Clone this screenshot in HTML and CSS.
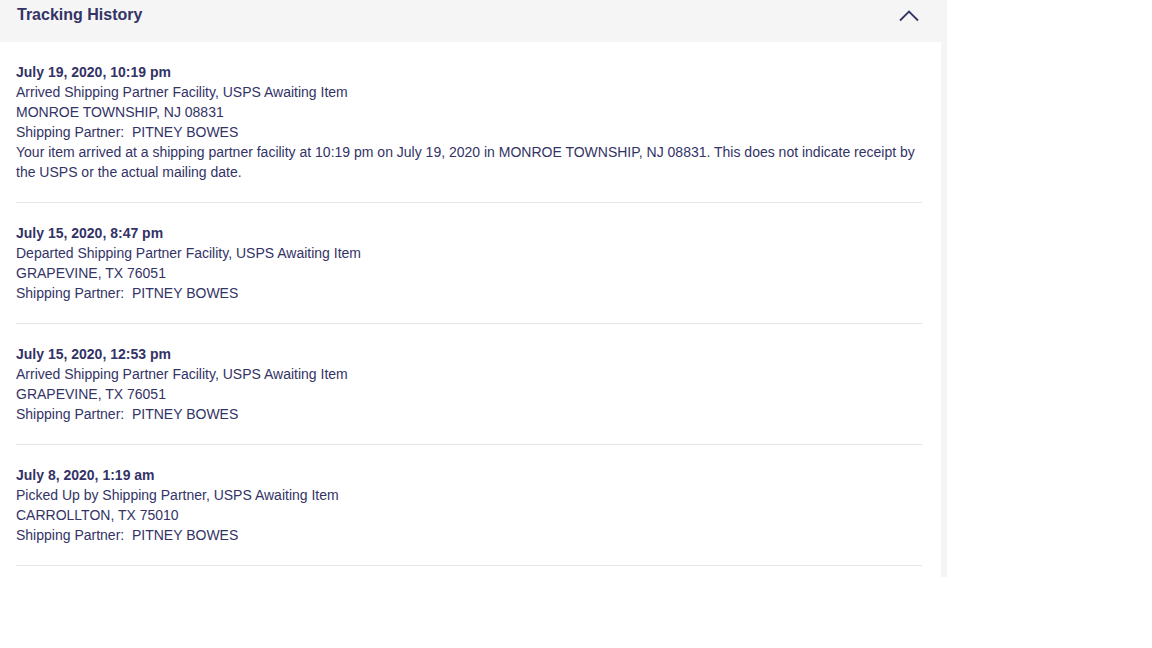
FILE: index.html
```html
<!doctype html>
<html>
<head>
<meta charset="UTF-8"/>
<link rel="stylesheet" href="styles.css">
<title>Tracking History</title>
</head>
<body>
<section class="history">
  <div class="history-head">
    <h2>Tracking History</h2>
    <svg class="chevron" width="20" height="12" viewBox="0 0 20 12">
      <polyline points="1,10.5 10,1.5 19,10.5" fill="none" stroke="#333366" stroke-width="1.8"/>
    </svg>
  </div>
  <div class="history-body">
    <div class="event">
      <div class="date">July 19, 2020, 10:19 pm</div>
      <div>Arrived Shipping Partner Facility, USPS Awaiting Item</div>
      <div>MONROE TOWNSHIP, NJ 08831</div>
      <div>Shipping Partner:&nbsp; PITNEY BOWES</div>
      <div>Your item arrived at a shipping partner facility at 10:19 pm on July 19, 2020 in MONROE TOWNSHIP, NJ 08831. This does not indicate receipt by the USPS or the actual mailing date.</div>
    </div>
    <div class="event">
      <div class="date">July 15, 2020, 8:47 pm</div>
      <div>Departed Shipping Partner Facility, USPS Awaiting Item</div>
      <div>GRAPEVINE, TX 76051</div>
      <div>Shipping Partner:&nbsp; PITNEY BOWES</div>
    </div>
    <div class="event">
      <div class="date">July 15, 2020, 12:53 pm</div>
      <div>Arrived Shipping Partner Facility, USPS Awaiting Item</div>
      <div>GRAPEVINE, TX 76051</div>
      <div>Shipping Partner:&nbsp; PITNEY BOWES</div>
    </div>
    <div class="event">
      <div class="date">July 8, 2020, 1:19 am</div>
      <div>Picked Up by Shipping Partner, USPS Awaiting Item</div>
      <div>CARROLLTON, TX 75010</div>
      <div>Shipping Partner:&nbsp; PITNEY BOWES</div>
    </div>
  </div>
</section>
</body>
</html>
```

FILE: styles.css
```css
body {
  margin: 0;
  font-family: "Liberation Sans", Arial, sans-serif;
  color: #333366;
  background: #ffffff;
}
.history {
  width: 947px;
  height: 577px;
  background: #f5f5f5;
}
.history-head {
  height: 42px;
  display: flex;
  align-items: flex-start;
  justify-content: space-between;
  padding: 5px 28px 0 17px;
  box-sizing: border-box;
}
.history-head h2 {
  margin: 0;
  font-size: 16px;
  font-weight: bold;
  line-height: 20px;
}
.chevron {
  margin-top: 5px;
}
.history-body {
  width: 941px;
  height: 535px;
  background: #ffffff;
  padding: 0 19px 0 16px;
  box-sizing: border-box;
}
.event {
  padding: 20px 0;
  border-bottom: 1px solid #e6e6e6;
  font-size: 14px;
  line-height: 20px;
}
.date {
  font-weight: bold;
}
```
